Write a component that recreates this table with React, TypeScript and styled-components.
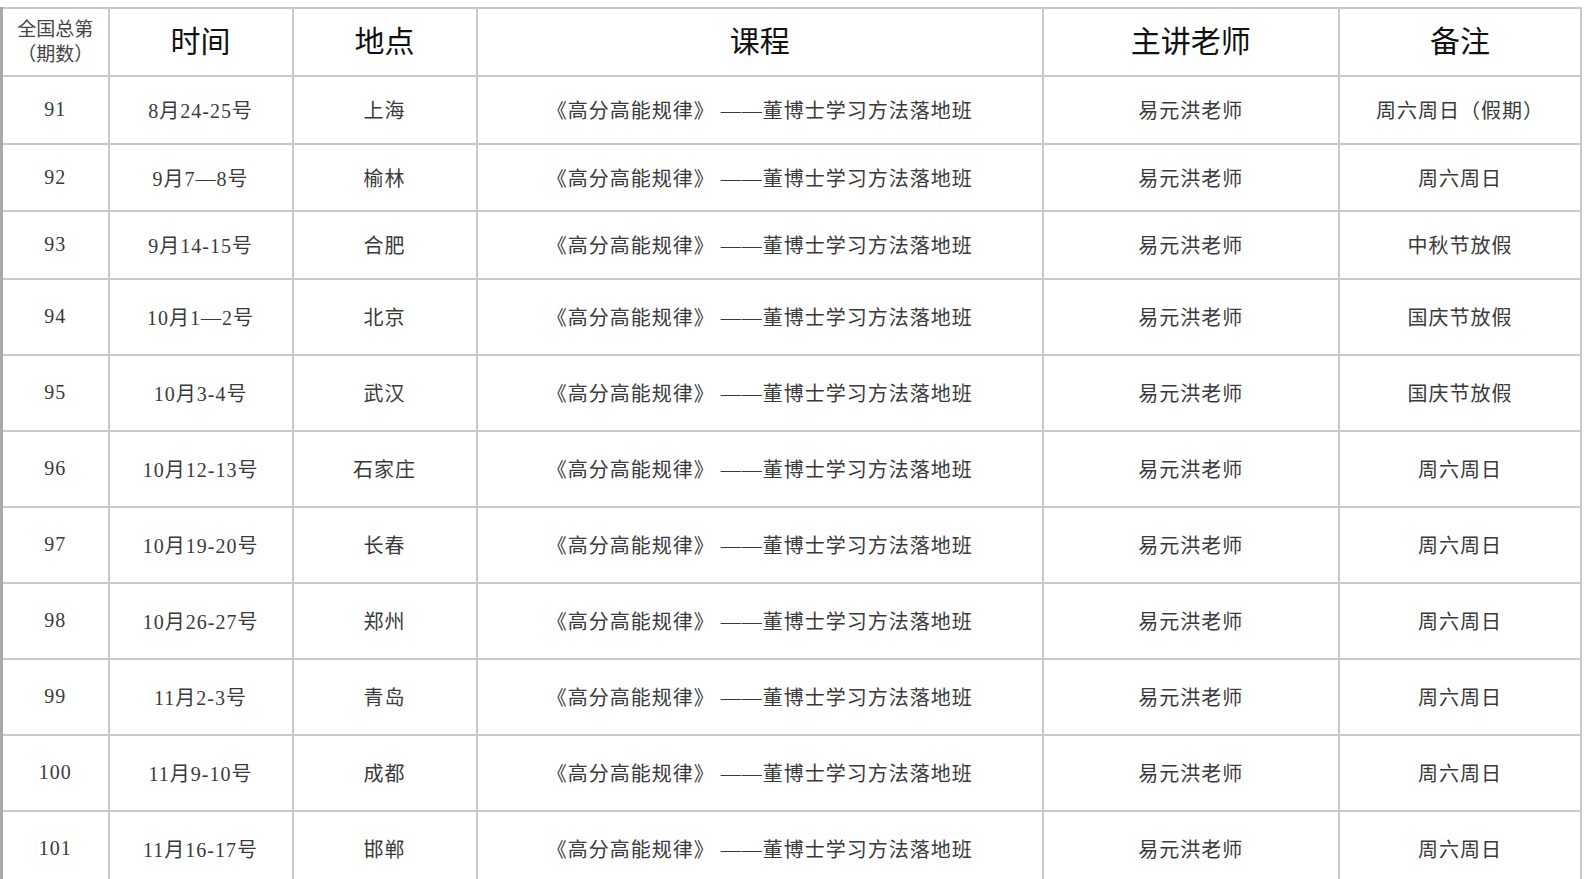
import React from "react";
import styled, { createGlobalStyle } from "styled-components";

const GlobalStyle = createGlobalStyle`
  html, body {
    margin: 0;
    padding: 0;
    background: #fff;
  }
`;

const Page = styled.div`
  width: 1585px;
  height: 879px;
  overflow: hidden;
  padding-top: 7px;
  box-sizing: border-box;
  background: #fff;
`;

const Table = styled.table`
  width: 1582px;
  table-layout: fixed;
  border-collapse: collapse;
  border-left: 3px solid #a9a9a9;
  font-family: "Liberation Serif", "Noto Sans CJK SC", serif;
`;

const HeadCell = styled.th`
  height: 66px;
  padding: 0;
  border: 2px solid #c9c9c9;
  font-weight: 400;
  font-size: 30px;
  line-height: 1;
  color: #111;
  text-align: center;
  vertical-align: middle;
`;

const SmallHead = styled.div`
  font-size: 19px;
  line-height: 25px;
  color: #444;
`;

const Row = styled.tr<{ $tall?: boolean }>`
  height: ${(p) => (p.$tall ? "76px" : "67.5px")};
`;

const Cell = styled.td`
  padding: 0;
  border: 2px solid #c9c9c9;
  font-size: 20px;
  letter-spacing: 1px;
  color: #3a3a3a;
  text-align: center;
  vertical-align: middle;
  white-space: nowrap;
`;

const COURSE = "《高分高能规律》 ——董博士学习方法落地班";
const TEACHER = "易元洪老师";

const rows = [
  { no: "91", time: "8月24-25号", place: "上海", note: "周六周日（假期）" },
  { no: "92", time: "9月7—8号", place: "榆林", note: "周六周日" },
  { no: "93", time: "9月14-15号", place: "合肥", note: "中秋节放假" },
  { no: "94", time: "10月1—2号", place: "北京", note: "国庆节放假" },
  { no: "95", time: "10月3-4号", place: "武汉", note: "国庆节放假" },
  { no: "96", time: "10月12-13号", place: "石家庄", note: "周六周日" },
  { no: "97", time: "10月19-20号", place: "长春", note: "周六周日" },
  { no: "98", time: "10月26-27号", place: "郑州", note: "周六周日" },
  { no: "99", time: "11月2-3号", place: "青岛", note: "周六周日" },
  { no: "100", time: "11月9-10号", place: "成都", note: "周六周日" },
  { no: "101", time: "11月16-17号", place: "邯郸", note: "周六周日" },
];

const App: React.FC = () => {
  return (
    <>
      <GlobalStyle />
      <Page>
        <Table>
          <colgroup>
            <col style={{ width: 107 }} />
            <col style={{ width: 184 }} />
            <col style={{ width: 184 }} />
            <col style={{ width: 566 }} />
            <col style={{ width: 296 }} />
            <col style={{ width: 242 }} />
          </colgroup>
          <thead>
            <tr>
              <HeadCell>
                <SmallHead>
                  全国总第
                  <br />
                  （期数）
                </SmallHead>
              </HeadCell>
              <HeadCell>时间</HeadCell>
              <HeadCell>地点</HeadCell>
              <HeadCell>课程</HeadCell>
              <HeadCell>主讲老师</HeadCell>
              <HeadCell>备注</HeadCell>
            </tr>
          </thead>
          <tbody>
            {rows.map((r, i) => (
              <Row key={r.no} $tall={i >= 3}>
                <Cell>{r.no}</Cell>
                <Cell>{r.time}</Cell>
                <Cell>{r.place}</Cell>
                <Cell>{COURSE}</Cell>
                <Cell>{TEACHER}</Cell>
                <Cell>{r.note}</Cell>
              </Row>
            ))}
          </tbody>
        </Table>
      </Page>
    </>
  );
};

export default App;
